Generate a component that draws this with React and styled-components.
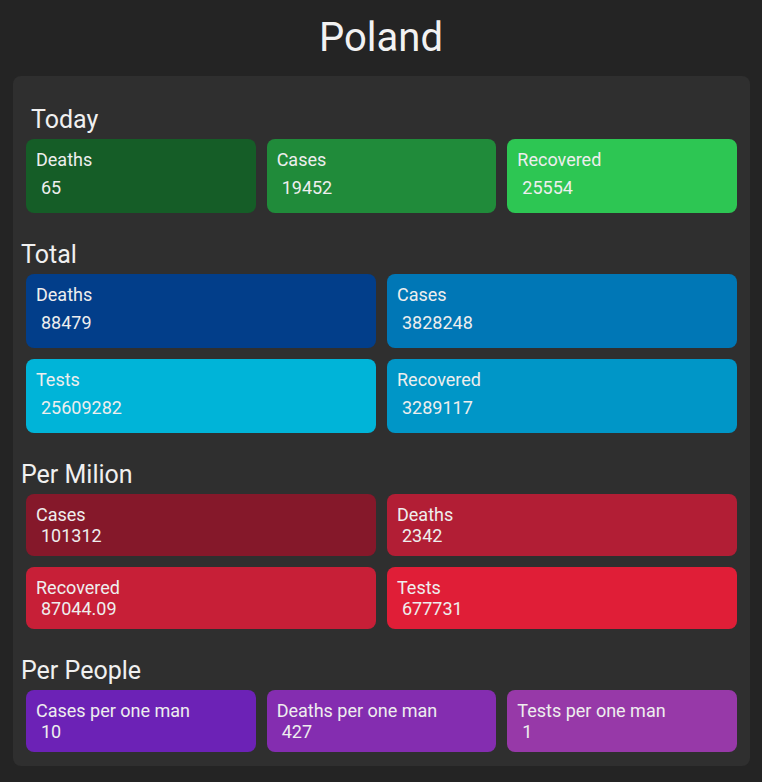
import React from "react";
import styled, { createGlobalStyle } from "styled-components";

const Global = createGlobalStyle`
  html, body { margin: 0; padding: 0; background: #242424; }
  body { font-family: Roboto, "Noto Sans", Arial, sans-serif; color: #eeeeee; }
`;

const Page = styled.div`
  display: flex;
  flex-direction: column;
  padding-bottom: 15px;
`;

const Title = styled.h1`
  margin: 14px 0 15px;
  text-align: center;
  font-size: 40px;
  line-height: 47px;
  font-weight: 400;
  color: #f2f2f2;
`;

const Panel = styled.div`
  margin: 0 12px 0 13px;
  background: #2f2f2f;
  border-radius: 8px;
  padding: 30px 0 14px;
  display: flex;
  flex-direction: column;
`;

const Section = styled.section`
  display: flex;
  flex-direction: column;
  & + & { margin-top: 28px; }
`;

const Heading = styled.h2`
  margin: 0 0 5px;
  padding-left: ${(p) => p.$indent}px;
  font-size: 25px;
  line-height: 28px;
  font-weight: 400;
  color: #f0f0f0;
`;

const Grid = styled.div`
  display: grid;
  grid-template-columns: repeat(${(p) => p.$cols}, 1fr);
  gap: 11px;
  padding: 0 13px;
`;

const Card = styled.div`
  background: ${(p) => p.$bg};
  border-radius: 8px;
  padding: 10px;
  font-size: 18px;
  line-height: 21px;
  color: #eeeeee;
`;

const Label = styled.div``;

const Value = styled.div`
  padding-left: 5px;
  margin-top: ${(p) => (p.$spaced ? 7 : 0)}px;
  margin-bottom: ${(p) => (p.$spaced ? 5 : 0)}px;
`;

const sections = [
  {
    title: "Today",
    indent: 18,
    cols: 3,
    spaced: true,
    items: [
      ["Deaths", "65", "#155d27"],
      ["Cases", "19452", "#208b3a"],
      ["Recovered", "25554", "#2dc653"],
    ],
  },
  {
    title: "Total",
    indent: 8,
    cols: 2,
    spaced: true,
    items: [
      ["Deaths", "88479", "#023e8a"],
      ["Cases", "3828248", "#0077b6"],
      ["Tests", "25609282", "#00b4d8"],
      ["Recovered", "3289117", "#0096c7"],
    ],
  },
  {
    title: "Per Milion",
    indent: 8,
    cols: 2,
    spaced: false,
    items: [
      ["Cases", "101312", "#85182a"],
      ["Deaths", "2342", "#b21e35"],
      ["Recovered", "87044.09", "#c71f37"],
      ["Tests", "677731", "#e01e37"],
    ],
  },
  {
    title: "Per People",
    indent: 8,
    cols: 3,
    spaced: false,
    items: [
      ["Cases per one man", "10", "#6c22b6"],
      ["Deaths per one man", "427", "#842db0"],
      ["Tests per one man", "1", "#9739a8"],
    ],
  },
];

export default function App() {
  return (
    <Page>
      <Global />
      <Title>Poland</Title>
      <Panel>
        {sections.map((s) => (
          <Section key={s.title}>
            <Heading $indent={s.indent}>{s.title}</Heading>
            <Grid $cols={s.cols}>
              {s.items.map(([label, value, bg]) => (
                <Card key={label} $bg={bg}>
                  <Label>{label}</Label>
                  <Value $spaced={s.spaced}>{value}</Value>
                </Card>
              ))}
            </Grid>
          </Section>
        ))}
      </Panel>
    </Page>
  );
}
